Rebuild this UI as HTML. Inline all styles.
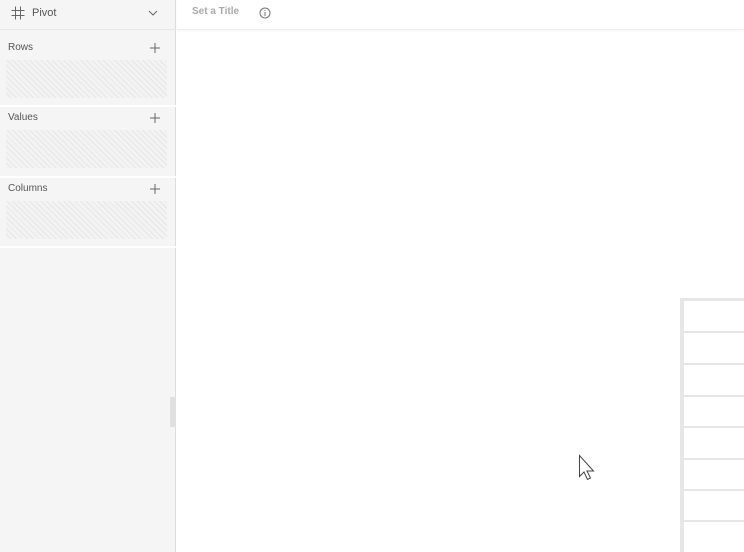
<!DOCTYPE html>
<html><head><style>
*{margin:0;padding:0;box-sizing:border-box}
body{width:744px;height:552px;background:#fff;font-family:"Liberation Sans",sans-serif;position:relative;overflow:hidden}
.sb{position:absolute;left:0;top:0;width:176px;height:552px;background:#f5f5f5;border-right:1px solid #dcdcdc}
.hdr{position:absolute;left:0;top:0;width:176px;height:30px;border-bottom:1px solid #e8e8e8}
.lbl{position:absolute;left:8px;font-size:10px;color:#555}
.plus{position:absolute;left:150px}
.hatch{position:absolute;left:6px;width:161px;height:38px;background:repeating-linear-gradient(45deg,#f3f3f3 0 3px,#e6e6e6 3px 4px)}
.sep{position:absolute;left:0;width:176px;height:2px;background:#fff}
.tb{position:absolute;left:177px;top:0;width:567px;height:30px;border-bottom:1px solid #eee;box-shadow:0 1px 2px rgba(0,0,0,.05)}
.tbl{position:absolute;left:680px;top:298px;width:64px;height:254px;border-left:4px solid #e6e6e6;border-top:3px solid #e6e6e6}
.rl{position:absolute;left:684px;width:60px;height:2px;background:#e6e6e6}
</style></head><body>
<div class="sb">
 <div class="hdr">
  <svg style="position:absolute;left:11px;top:6px" width="14" height="14" viewBox="0 0 14 14" fill="none" stroke="#666" stroke-width="1"><path d="M4.5 0.5V13.5M9.5 0.5V13.5M0.5 4.5H13.5M0.5 9.5H13.5"/></svg>
  <span style="position:absolute;left:32px;top:7px;font-size:11px;color:#555">Pivot</span>
  <svg style="position:absolute;left:148px;top:10px" width="10" height="6" viewBox="0 0 10 6" fill="none" stroke="#666"><path d="M1 1L5 5L9 1"/></svg>
 </div>
 <span class="lbl" style="top:42px">Rows</span><svg class="plus" style="top:43px" width="10" height="10" viewBox="0 0 10 10" stroke="#666"><path d="M5 0V10M0 5H10"/></svg>
 <div class="hatch" style="top:60px"></div>
 <div class="sep" style="top:105px"></div>
 <span class="lbl" style="top:112px">Values</span><svg class="plus" style="top:113px" width="10" height="10" viewBox="0 0 10 10" stroke="#666"><path d="M5 0V10M0 5H10"/></svg>
 <div class="hatch" style="top:130px"></div>
 <div class="sep" style="top:176px"></div>
 <span class="lbl" style="top:183px">Columns</span><svg class="plus" style="top:184px" width="10" height="10" viewBox="0 0 10 10" stroke="#666"><path d="M5 0V10M0 5H10"/></svg>
 <div class="hatch" style="top:201px"></div>
 <div class="sep" style="top:246px"></div>
 <div style="position:absolute;left:170px;top:397px;width:6px;height:30px;background:#e0e0e0"></div>
</div>
<div class="tb">
 <span style="position:absolute;left:15px;top:6px;font-size:10px;font-weight:bold;color:#aaa">Set a Title</span>
 <svg style="position:absolute;left:82px;top:7px" width="12" height="12" viewBox="0 0 12 12" fill="none" stroke="#777"><circle cx="6" cy="6" r="5"/><path d="M6 5V9M6 3V4"/></svg>
</div>
<div class="tbl"></div>
<div class="rl" style="top:331px"></div>
<div class="rl" style="top:363px"></div>
<div class="rl" style="top:395px"></div>
<div class="rl" style="top:426px"></div>
<div class="rl" style="top:458px"></div>
<div class="rl" style="top:489px"></div>
<div class="rl" style="top:520px"></div>
<svg style="position:absolute;left:578px;top:454px" width="20" height="30" viewBox="0 0 20 30"><path d="M1.5 1.5V22.5L6 18L9.5 25.5L12.5 24L9 17H15.5Z" fill="#fff" stroke="#444" stroke-width="1"/></svg>
</body></html>
